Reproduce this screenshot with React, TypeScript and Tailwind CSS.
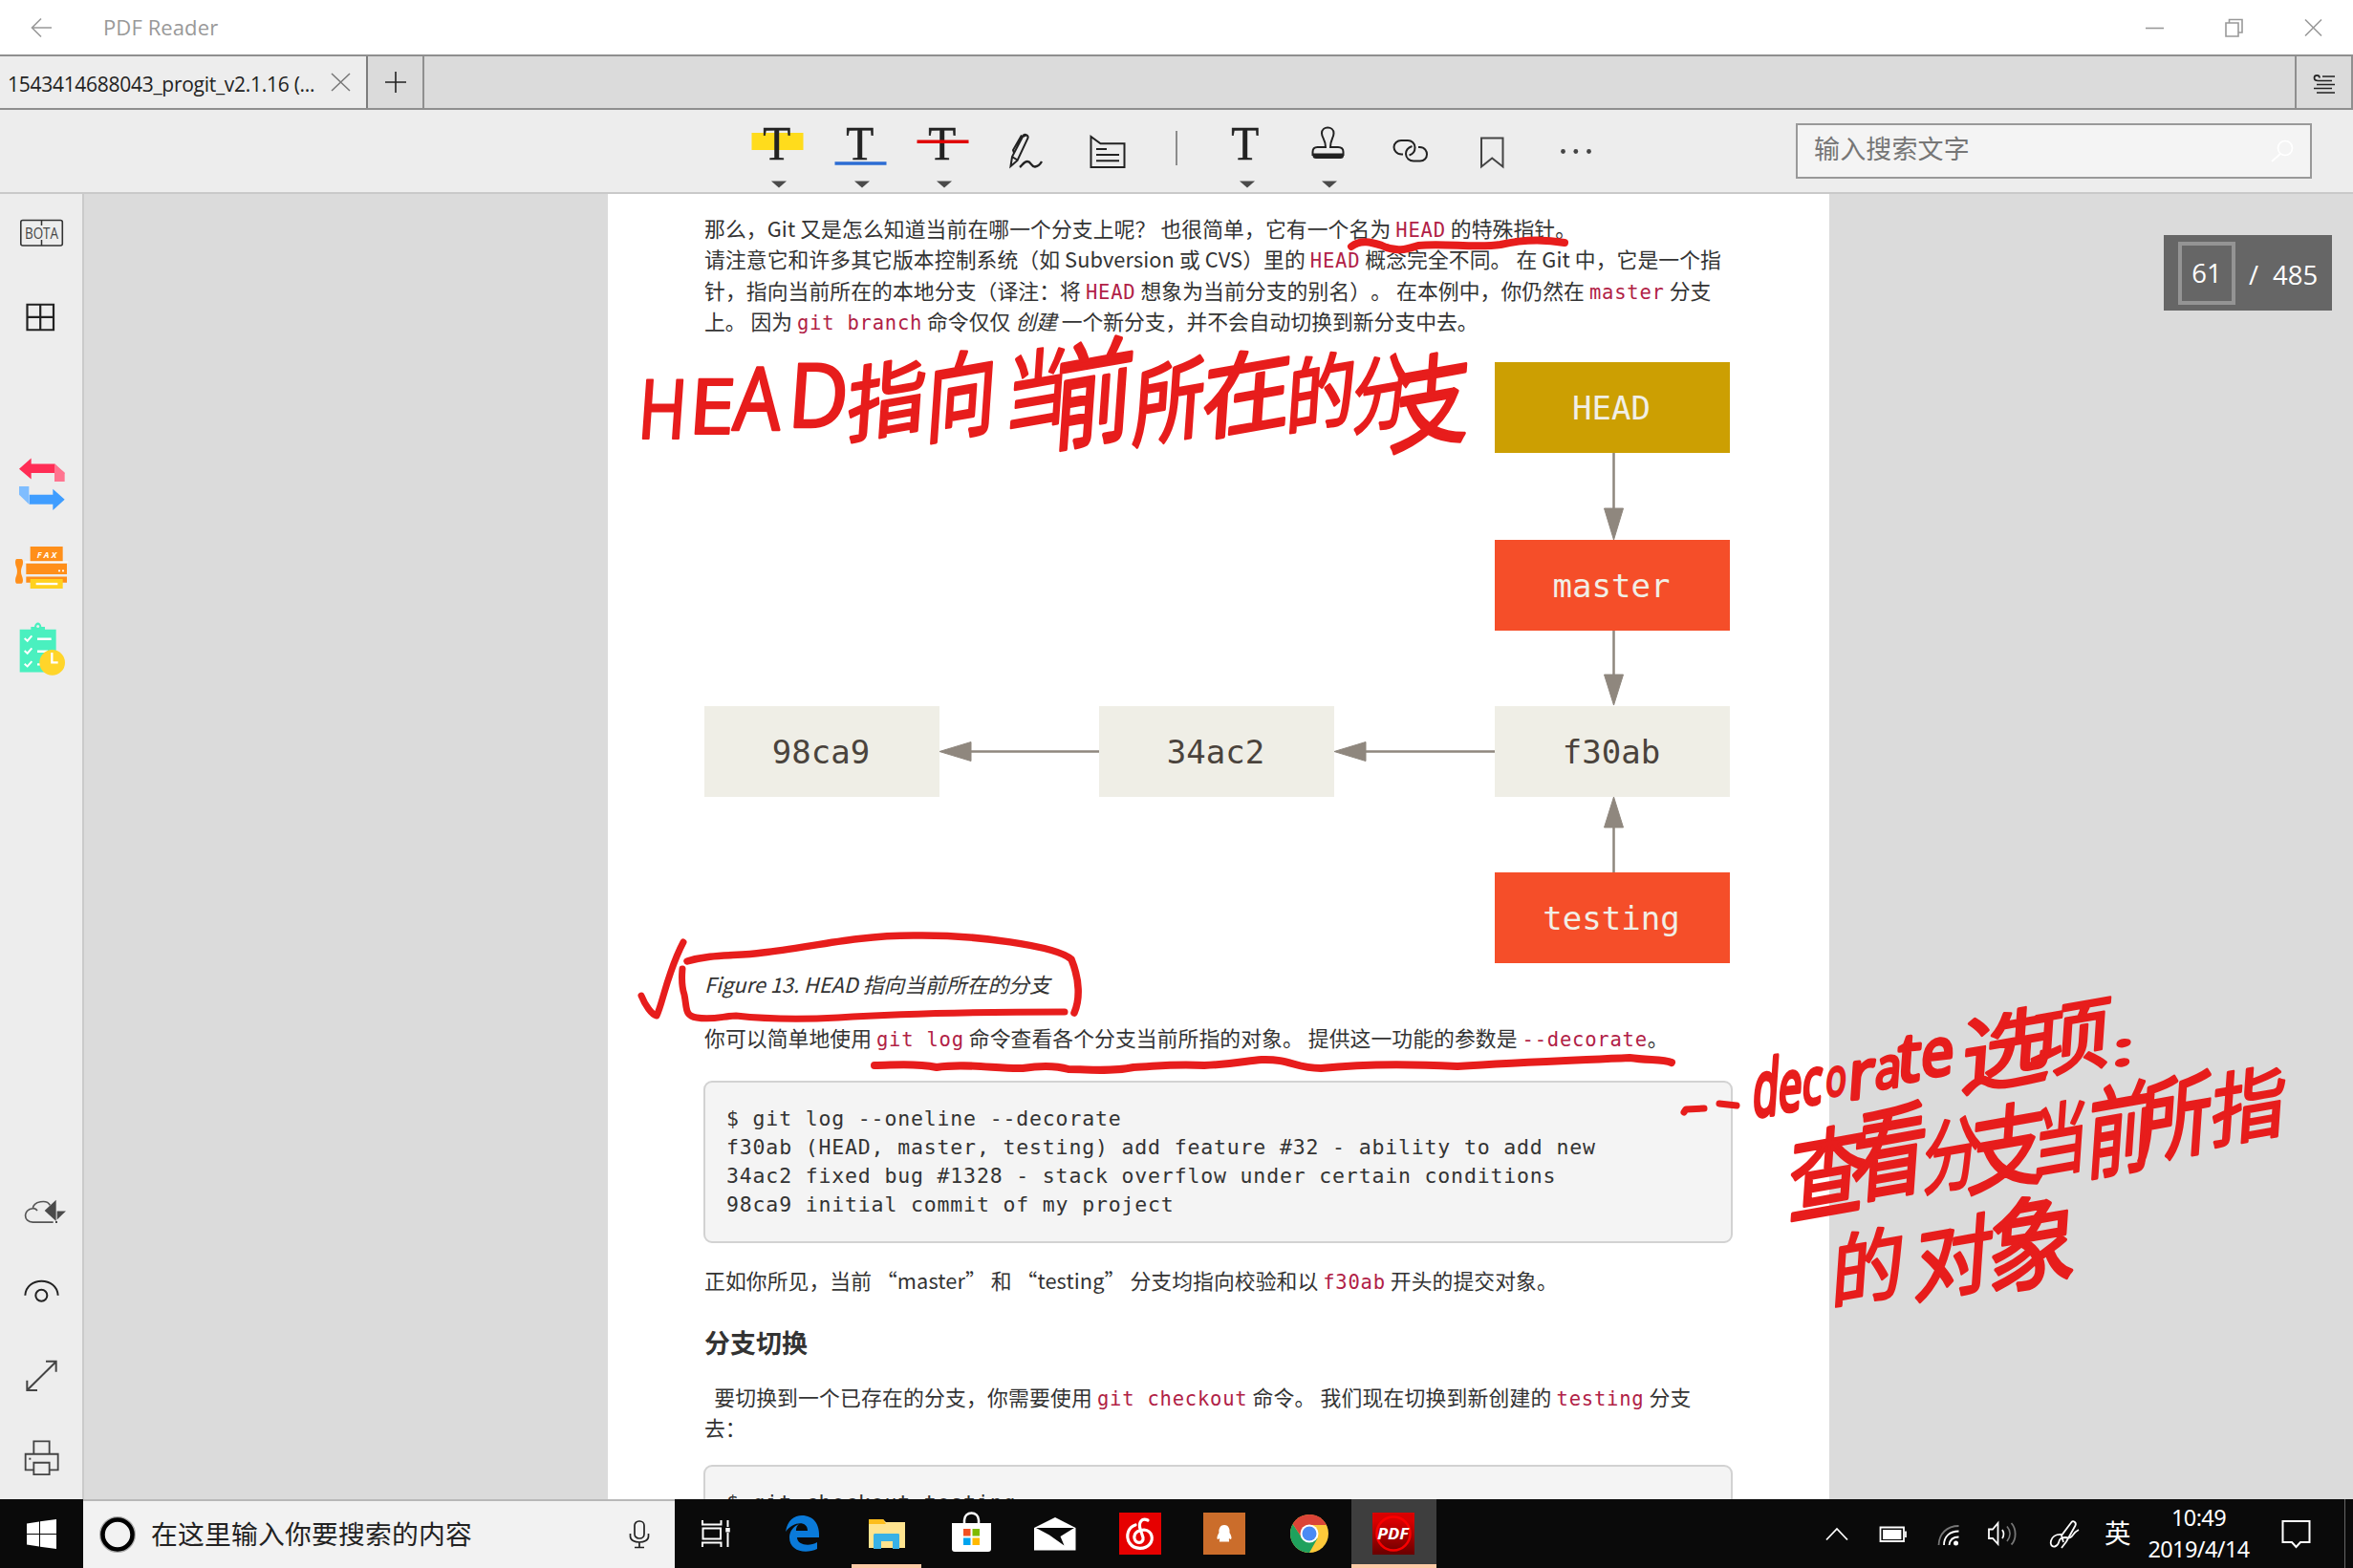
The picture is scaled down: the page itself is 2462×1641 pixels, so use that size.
import type { ReactNode } from 'react';

const INK = '#e71d1c';

/* ---------- title, tabs, toolbar ---------- */

function TitleBar() {
  return (
    <header className="flex h-[57px] items-center bg-white text-[#999]">
      <svg className="ml-[32px] h-[22px] w-[23px]" viewBox="0 0 23 22" fill="none" stroke="currentColor" strokeWidth="1.6">
        <path d="M22 11H1.5M11 1.5 1.5 11l9.500 9.500" />
      </svg>
      <span className="ml-[53px] text-[22px] tracking-[0.1px]">PDF Reader</span>
      <div className="ml-auto flex items-center gap-[64px] pr-[32px]">
        <svg className="h-[20px] w-[19px]" viewBox="0 0 19 20" stroke="currentColor" strokeWidth="1.6"><path d="M0 10.500H19" /></svg>
        <svg className="h-[20px] w-[19px]" viewBox="0 0 19 20" fill="none" stroke="currentColor" strokeWidth="1.6">
          <path d="M1 5h13v14H1zM4.500 5V1.500H18V15h-4" />
        </svg>
        <svg className="h-[20px] w-[19px]" viewBox="0 0 19 20" stroke="currentColor" strokeWidth="1.6"><path d="M1 1.500 18 18.500M18 1.500 1 18.500" /></svg>
      </div>
    </header>
  );
}

function TabBar() {
  return (
    <div className="flex h-[58px] border-y-2 border-[#8f8f8f] bg-[#dbdbdb]">
      <div className="flex w-[385px] items-center border-r-2 border-[#7d7d7d] bg-[#ededed] pl-[8px] text-[#222]">
        <span className="w-[322px] pt-[5px] whitespace-nowrap text-[21px] tracking-[-0.28px]">1543414688043_progit_v2.1.16 (...</span>
        <svg className="ml-[16px] h-[20px] w-[21px]" viewBox="0 0 21 20" stroke="#777" strokeWidth="1.5"><path d="M1 1 20 19M20 1 1 19" /></svg>
      </div>
      <div className="flex w-[59px] items-center justify-center border-r-2 border-[#8f8f8f]">
        <svg className="h-[22px] w-[22px]" viewBox="0 0 22 22" stroke="#222" strokeWidth="1.6"><path d="M0 11H22M11 0V22" /></svg>
      </div>
      <div className="ml-auto flex w-[61px] items-center justify-center border-x-2 border-[#8f8f8f]">
        <svg className="mt-[4px] h-[22px] w-[24px]" viewBox="0 0 24 22" fill="none" stroke="#222" strokeWidth="1.7">
          <path d="M10 3H23M7 4.500C7 1 1.500 1 1.500 4.500c0 3 2 3 4 3H20M4 11.500H23M1 15.500H20M4 20H23" />
        </svg>
      </div>
    </div>
  );
}

function Tool({ children, caret }: { children?: ReactNode; caret?: boolean }) {
  return (
    <svg className="h-[87px] w-[86.5px] shrink-0" viewBox="0 0 86.5 87" fill="none" stroke="#222" strokeWidth="2">
      {children}
      {caret && <path d="M37 74.500H53L45 81.500Z" fill="#4a4a4a" stroke="none" />}
    </svg>
  );
}

function LetterT() {
  return (
    <text x="42.8" y="51.5" textAnchor="middle" fontFamily="Liberation Serif, serif" fontSize="50" fill="#222" stroke="#222" strokeWidth="0.5" textLength="29" lengthAdjust="spacingAndGlyphs">
      T
    </text>
  );
}

function Toolbar() {
  return (
    <div className="flex h-[88px] items-start border-b-2 border-[#c9c9c9] bg-[#ededed]">
      <div className="ml-[770px] flex">
        <Tool caret>
          <path d="M16.500 24H70.500V42H16.500Z" fill="#ffdc1c" stroke="none" />
          <LetterT />
        </Tool>
        <Tool caret>
          <LetterT />
          <path d="M16.500 56H70.500" stroke="#2c6cd3" strokeWidth="3.6" />
        </Tool>
        <Tool caret>
          <LetterT />
          <path d="M16.500 33.200H70.500" stroke="#e00000" strokeWidth="3.600" />
        </Tool>
        <Tool>
          <path d="M27.500 59 29 49 40.500 27c1-2.500 6-.5 5 2.500L34.500 53 27.500 59ZM40 28 43.500 26.500M31 45 30 42 39 26.500M29 49l5.500 3.500" />
          <path d="M37 60c2.500-2 4.500-6 8-6 4 0 4 6 8 5.500 3-.500 5-2 7-5.500" strokeWidth="2.400" />
        </Tool>
        <Tool>
          <path d="M25.500 60V28l10 7.200H60.500V60ZM31 41H42M31 47H55M31 53.200H55" />
        </Tool>
        <div className="flex w-[57.2px] justify-center pt-[22px]">
          <div className="h-[36px] w-[1.500px] bg-[#8c8c8c]" />
        </div>
        <Tool caret><LetterT /></Tool>
        <Tool caret>
          <path d="M41 39C41 31 37 29 37 24.500c0-8 12.500-8 12.500 0C49.500 29 46 31 46 39H54c3.500 0 5.500 1.500 5.500 5v3H27.500V44c0-3.500 2-5 5-5Z" />
          <path d="M29 47H58.500V48c0 1-1 1.500-2 1.500H31c-1 0-2-.5-2-1.500Z" strokeWidth="3" />
        </Tool>
        <Tool>
          <path d="M35 46.500H33.500C28 46.500 25.500 42 25.500 39 25.500 35 29 32 33 32H40C44 32 47.500 35 47.500 39.500 47.500 44 44.500 46.500 41.500 47.500" />
          <path d="M51 39H52.500C58 39 60 43.500 60 46.500 60 50.500 57 53.500 53 53.500H46C42 53.500 38 50.500 38 46 38 41.500 41.500 39 44.500 38" />
        </Tool>
        <Tool><path d="M31 29.500H53.500V59.500L42.200 50.500 31 59.500Z" stroke="#444" /></Tool>
        <Tool>
          <g fill="#444" stroke="none">
            <circle cx="29.500" cy="43.500" r="2.400" />
            <circle cx="42.800" cy="43.500" r="2.400" />
            <circle cx="56.500" cy="43.500" r="2.400" />
          </g>
        </Tool>
      </div>
      <div className="mr-[43px] ml-auto mt-[14px] flex h-[58px] w-[540px] items-center justify-between border-2 border-[#999] bg-[#f4f4f4] pr-[17px] pl-[17px]">
        <span className="-mt-[4px] text-[27px] tracking-[0.15px] text-[#767676]">输入搜索文字</span>
        <svg className="h-[24px] w-[24px]" viewBox="0 0 24 24" fill="none" stroke="#fff" strokeWidth="1.700">
          <circle cx="15" cy="9" r="7.500" /><path d="M10 15 1 23" />
        </svg>
      </div>
    </div>
  );
}

/* ---------- left rail ---------- */

function Rail({ box, children }: { box: string; children: ReactNode }) {
  return <svg className="block h-[87.75px] w-[87px]" viewBox={box} fill="none">{children}</svg>;
}

function Sidebar() {
  return (
    <aside className="flex w-[88px] shrink-0 flex-col justify-between border-r-2 border-[#cacaca] bg-[#ededed]">
      <div className="-mt-[3px]">
        <Rail box="0 200 87 87.75">
          <rect x="21.800" y="230.500" width="43.500" height="26.500" rx="2" stroke="#333" strokeWidth="1.600" />
          <path d="M43.500 230V236M43.500 251V257" stroke="#333" strokeWidth="1.500" />
          <text x="43.500" y="249.500" textAnchor="middle" fontSize="15.5" fill="#444" textLength="35" lengthAdjust="spacingAndGlyphs">BOTA</text>
        </Rail>
        <Rail box="0 287.75 87 87.75">
          <path d="M28.500 318.500H56V345H28.500ZM28.500 331.700H56M42.200 318.500V345" stroke="#222" strokeWidth="2.200" />
        </Rail>
        <div className="h-[87px]" />
        <Rail box="0 66 261 263">
          <path d="M60 149 98 115V133H172L203 164V162H98V181Z" fill="#ff2d55" />
          <path d="M171 133 203 160V189H171Z" fill="#ff7490" />
          <path d="M203 245 166 212V230H92V260H166V279Z" fill="#3f9dff" />
          <path d="M60 204H91V260L60 230Z" fill="#7fbdff" />
        </Rail>
        <Rail box="0 329 261 263">
          <path d="M95 395H197V441H95ZM82 448H210V482H82ZM82 489H210V508H82Z" fill="#ff8f1a" />
          <path d="M78 443H214" stroke="#fff" strokeWidth="4" />
          <path d="M53 434H67C74 434 73 452 69 458 65 468 65 478 69 488 74 500 72 511 67 511H53C47 511 47 496 51 488 55 478 55 468 51 458 47 448 47 434 53 434Z" fill="#ff8f1a" />
          <path d="M95 497H197V527H95Z" fill="#ffd11f" />
          <path d="M113 512H181" stroke="#fff" strokeWidth="7" />
          <path d="M183 471H189M195 471H201" stroke="#fff" strokeWidth="5" />
          <text x="147" y="430" textAnchor="middle" fontSize="27" fontWeight="700" fontStyle="italic" fill="#fff" textLength="62">FAX</text>
        </Rail>
        <Rail box="0 592 261 263">
          <path d="M62 654H97V646H108C110 628 128 628 130 646H141V654H176V788H62Z" fill="#4af0bf" />
          <circle cx="119" cy="644" r="4.500" fill="#ededed" />
          <path d="M117 684H161M117 723H150M117 764H128" stroke="#fff" strokeWidth="7" />
          <path d="M77 682 86 690 100 674M77 721 86 729 100 713M77 762 86 770 100 754" stroke="#fff" strokeWidth="6" />
          <circle cx="164" cy="758" r="40" fill="#ffd52a" />
          <path d="M163 727V758H182" stroke="#fff" strokeWidth="7" />
        </Rail>
      </div>
      <div>
        <Rail box="0 -6 261 263">
          <path d="M167 177H103C72 177 72 136 103 134 105 112 147 104 157 124M103 134Q112 133 117 141" stroke="#555" strokeWidth="5" />
          <path d="M140 141 176 107V174ZM179 142H207L179 169Z" fill="#4a4a4a" />
          <path d="M174 177H180" stroke="#4a4a4a" strokeWidth="6" />
        </Rail>
        <Rail box="0 257 261 263">
          <path d="M79 406C82 346 179 346 182 406" stroke="#222" strokeWidth="6" />
          <circle cx="130" cy="406" r="18" stroke="#222" strokeWidth="6" />
        </Rail>
        <Rail box="0 520 261 263">
          <path d="M85 703 176 613M144 612H176V645M85 672V703H117" stroke="#444" strokeWidth="6" />
        </Rail>
        <Rail box="0 784 261 263">
          <path d="M106 906V866H155V906M104 956H80V906H182V956H157M106 933H155V970H106Z" stroke="#444" strokeWidth="5.500" />
          <path d="M91 921H97" stroke="#444" strokeWidth="6" />
        </Rail>
      </div>
    </aside>
  );
}

/* ---------- document page ---------- */

function Code({ children }: { children: ReactNode }) {
  return <code className="font-['DejaVu_Sans_Mono',monospace] text-[20.5px] tracking-[0.78px] text-[#b12146]">{children}</code>;
}

function Line({ children, cls = '' }: { children: ReactNode; cls?: string }) {
  return <div className={`h-[32.4px] leading-[32.4px] whitespace-pre ${cls}`}>{children}</div>;
}

const nodes = [
  { label: 'HEAD', cls: 'left-[827px] top-[0px] bg-[#cc9f02] text-[#f1efe6]' },
  { label: 'master', cls: 'left-[827px] top-[186px] bg-[#f54e29] text-[#f1efe6]' },
  { label: '98ca9', cls: 'left-0 top-[360px] bg-[#efeee6] text-[#4a433c]' },
  { label: '34ac2', cls: 'left-[413px] top-[360px] bg-[#efeee6] text-[#4a433c]' },
  { label: 'f30ab', cls: 'left-[827px] top-[360px] bg-[#efeee6] text-[#4a433c]' },
  { label: 'testing', cls: 'left-[827px] top-[534px] bg-[#f54e29] text-[#f1efe6]' },
];

function Diagram() {
  return (
    <div className="relative mt-[26.5px] h-[629px] w-[1074px]">
      <svg className="absolute inset-0 h-full w-full" viewBox="0 0 1074 629" fill="#8f877e" stroke="#8f877e" strokeWidth="2.500">
        <path d="M951.500 94V155M951.500 280V330M951.500 534V484M828 407.500H690M413 407.500H275" />
        <path d="M941.500 153H961.500L951.500 186ZM941.500 327H961.500L951.500 359ZM941.500 487H961.500L951.500 455ZM692 397.500V417.500L659 407.500ZM279 397.500V417.500L246 407.500Z" strokeWidth="1" />
      </svg>
      {nodes.map((n) => (
        <div key={n.label} className={`absolute flex h-[95px] w-[246px] items-center justify-center pt-px pr-[2px] font-['DejaVu_Sans_Mono',monospace] text-[34px] ${n.cls}`}>
          {n.label}
        </div>
      ))}
    </div>
  );
}

function Pre({ lines, cls }: { lines: string[]; cls: string }) {
  return (
    <pre className={`-ml-px w-[1077px] rounded-[9px] border-2 border-[#d2d2d2] bg-[#f4f4f4] pt-[23px] pl-[22px] font-['DejaVu_Sans_Mono',monospace] text-[21.5px] leading-[30px] tracking-[0.84px] ${cls}`}>
      {lines.join('\n')}
    </pre>
  );
}

function Page() {
  return (
    <main className="flex w-[1278px] flex-col overflow-hidden bg-white pt-[20px] pl-[101px] text-[21.8px] text-[#333] [text-spacing-trim:space-all] [&>*]:shrink-0">
      <div>
        <Line cls="tracking-[0.1px]">那么，Git 又是怎么知道当前在哪一个分支上呢？ 也很简单，它有一个名为 <Code>HEAD</Code> 的特殊指针。</Line>
        <Line cls="tracking-[0.09px]">请注意它和许多其它版本控制系统（如 Subversion 或 CVS）里的 <Code>HEAD</Code> 概念完全不同。 在 Git 中，它是一个指</Line>
        <Line cls="tracking-[0.09px]">针，指向当前所在的本地分支（译注：将 <Code>HEAD</Code> 想象为当前分支的别名）。 在本例中，你仍然在 <Code>master</Code> 分支</Line>
        <Line>上。 因为 <Code>git branch</Code> 命令仅仅 <em>创建</em> 一个新分支，并不会自动切换到新分支中去。</Line>
      </div>
      <Diagram />
      <div className="mt-[6px] italic"><Line>Figure 13. HEAD 指向当前所在的分支</Line></div>
      <div className="mt-[24px]">
        <Line cls="tracking-[0.08px]">你可以简单地使用 <Code>git log</Code> 命令查看各个分支当前所指的对象。 提供这一功能的参数是 <Code>--decorate</Code>。</Line>
      </div>
      <Pre
        cls="mt-[28px] h-[170px]"
        lines={[
          '$ git log --oneline --decorate',
          'f30ab (HEAD, master, testing) add feature #32 - ability to add new',
          '34ac2 fixed bug #1328 - stack overflow under certain conditions',
          '98ca9 initial commit of my project',
        ]}
      />
      <div className="mt-[23px]"><Line cls="tracking-[0.08px]">正如你所见，当前 “master” 和 “testing” 分支均指向校验和以 <Code>f30ab</Code> 开头的提交对象。</Line></div>
      <h2 className="mt-[29px] h-[40px] text-[27px] leading-[40px] font-bold">分支切换</h2>
      <div className="mt-[20.5px]">
        <Line cls="tracking-[0.19px]">{'  '}要切换到一个已存在的分支，你需要使用 <Code>git checkout</Code> 命令。 我们现在切换到新创建的 <Code>testing</Code> 分支</Line>
        <Line>去：</Line>
      </div>
      <Pre cls="mt-[22px] h-[120px]" lines={['$ git checkout testing']} />
    </main>
  );
}

/* ---------- pen annotations ---------- */

type Mark = [string, number, number, number, number];

const marks: Mark[] = [
  ['H', 675, 398, 712, 459], ['E', 730, 397, 763, 454], ['A', 768, 385, 818, 450], ['D', 834, 381, 884, 447],
  ['指', 891, 375, 965, 460], ['向', 974, 364, 1039, 462], ['当', 1056, 362, 1115, 450], ['前', 1108, 352, 1182, 470],
  ['所', 1190, 373, 1257, 466], ['在', 1263, 363, 1347, 457], ['的', 1350, 368, 1415, 453], ['分', 1419, 368, 1474, 453],
  ['支', 1460, 367, 1534, 472],
  ['d', 1837, 1106, 1858, 1168], ['e', 1863, 1122, 1883, 1163], ['c', 1888, 1119, 1905, 1156], ['o', 1912, 1117, 1930, 1147],
  ['r', 1939, 1111, 1960, 1149], ['a', 1964, 1106, 1985, 1139], ['t', 1987, 1085, 2009, 1132], ['e', 2013, 1088, 2041, 1126],
  ['选', 2057, 1054, 2142, 1142], ['项', 2129, 1044, 2205, 1126], [':', 2216, 1089, 2226, 1115],
  ['查', 1876, 1176, 1949, 1278], ['看', 1942, 1152, 2013, 1257], ['分', 2016, 1166, 2070, 1249], ['支', 2064, 1152, 2137, 1248],
  ['当', 2130, 1150, 2182, 1232], ['前', 2188, 1130, 2251, 1233], ['所', 2242, 1120, 2311, 1216], ['指', 2318, 1115, 2388, 1198],
  ['的', 1921, 1284, 1989, 1367], ['对', 2008, 1271, 2082, 1360], ['象', 2085, 1248, 2170, 1353],
];

/* left, width, top, height of the visible shape in a 100-unit em */
const shapes: Record<string, [number, number, number, number]> = {
  H: [10, 54, 71, 71], E: [10, 38, 71, 71], A: [0, 64, 71, 71], D: [10, 58, 71, 71],
  d: [5, 48, 76, 77], e: [5, 46, 54, 55], c: [5, 39, 54, 55], o: [5, 50, 54, 55],
  r: [8, 32, 54, 54], a: [4, 43, 54, 55], t: [2, 33, 66, 67], ':': [7, 12, 54, 55],
};

function Annotations() {
  return (
    <svg className="pointer-events-none absolute inset-0 h-[1641px] w-[2462px]" viewBox="0 0 2462 1641" fill="none" stroke={INK} strokeLinecap="round" strokeLinejoin="round">
      {marks.map(([ch, x0, y0, x1, y1], i) => {
        const [l, w, t, h] = shapes[ch] ?? [5, 90, 84, 92];
        const wide = !shapes[ch];
        const slant = wide ? -10 : i < 4 ? 0 : -6;
        return (
          <text
            key={i}
            fontSize="100"
            fill={INK}
            strokeWidth={wide ? 3.5 : i < 4 ? 2.5 : 6}
            className={wide ? "font-['Noto_Sans_CJK_SC',sans-serif]" : "font-['Noto_Sans',sans-serif]"}
            transform={`translate(${(x0 + x1) / 2} ${(y0 + y1) / 2}) skewY(${slant}) skewX(-4) scale(${(x1 - x0) / w} ${((y1 - y0) / h) * (wide ? 0.92 : 1)}) translate(${-l - w / 2} ${t - h / 2})`}
          >
            {ch}
          </text>
        );
      })}
      <g strokeWidth="8">
        <path d="M1414 258C1424 250 1436 254 1446 257 1462 265 1474 260 1484 257 1510 254 1545 260 1570 256 1595 250 1615 250 1637 254" />
        <path d="M671 1042C675 1052 682 1062 687 1063 693 1052 698 1018 715 986" strokeWidth="7" />
        <path d="M719 1006C745 998 770 1001 798 997 846 992 893 979 956 979 1020 978 1106 990 1121 1004 1130 1026 1130 1046 1124 1060" strokeWidth="7.500" />
        <path d="M714 1014C713 1025 714 1035 716 1041 719 1055 716 1063 729 1065 746 1068 758 1063 770 1063 806 1067 838 1067 877 1065 940 1061 996 1059 1114 1059" strokeWidth="7" />
        <path d="M915 1115C935 1115 955 1112 980 1117 1010 1112 1045 1119 1070 1118 1095 1114 1108 1116 1118 1119 1140 1119 1162 1122 1186 1117 1210 1116 1228 1113 1260 1115 1290 1114 1305 1110 1320 1109 1350 1108 1355 1118 1382 1118 1410 1115 1450 1112 1525 1116 1585 1112 1640 1110 1705 1107 1725 1110 1740 1108 1749 1112" strokeWidth="8" />
        <path d="M1762 1164 1764 1161 1783 1160M1799 1155 1817 1157" strokeWidth="7" />
      </g>
    </svg>
  );
}

/* ---------- taskbar ---------- */

function TaskItem({ children, active, open }: { children: ReactNode; active?: boolean; open?: boolean }) {
  return (
    <div className={`relative flex h-full w-[88.5px] justify-center ${active ? 'bg-[#3e3e3e]' : ''}`}>
      <svg className="h-[72px] w-[88px]" viewBox="0 0 88 72" fill="none">{children}</svg>
      {open && <div className={`absolute bottom-0 h-[4px] bg-[#fccaa6] ${active ? 'inset-x-0' : 'inset-x-[8px]'}`} />}
    </div>
  );
}

function Taskbar() {
  return (
    <footer className="flex h-[72px] shrink-0 bg-[#0a0a0a] text-white">
      <div className="flex w-[87px] items-center justify-center">
        <svg className="h-[31px] w-[31px]" viewBox="0 0 31 31" fill="#fff"><path d="M0 4.500 13 2.500V15H0ZM14 2.300 31 0V15H14ZM0 16H13V28.500L0 26.500ZM14 16H31V31L14 28.700Z" /></svg>
      </div>
      <div className="flex w-[619px] items-center border-t-2 border-[#b8b8b8] bg-[#f2f2f2] pr-[26px] pl-[16px] text-[#222]">
        <svg className="h-[40px] w-[40px]" viewBox="0 0 40 40" fill="none">
          <circle cx="20" cy="20" r="17" stroke="#aaa" strokeWidth="4" />
          <circle cx="20" cy="20" r="15.500" stroke="#000" strokeWidth="4.500" />
        </svg>
        <span className="-mt-px ml-[15px] text-[27.8px] tracking-[0.2px]">在这里输入你要搜索的内容</span>
        <svg className="ml-auto h-[30px] w-[22px]" viewBox="0 0 22 30" fill="none" stroke="#222" strokeWidth="1.700">
          <rect x="6" y="1" width="10" height="18" rx="4.500" /><path d="M1.500 14v3c0 8 19 8 19 0V14M11 23V28.500M6 28.500H16" />
        </svg>
      </div>
      <TaskItem>
        <g stroke="#fff" strokeWidth="2"><path d="M29 22V26.500H48.500V22M29 50V45.500H48.500V50M29.500 30.500H48V41.500H29.500ZM55.500 22V29M55.500 35V50" /><path d="M55.500 30V34.500" strokeWidth="4.500" /></g>
      </TaskItem>
      <TaskItem>
        <path d="M27 34C29 22 36 17 44 17 56 17 63 26 62 40H39C39 48 52 50 60 45V52C47 58 31 54 31 40 31 33 36 28 41 26 38 29 38 31 38 33H50C50 22 35 23 27 34Z" fill="#0a7ad9" />
      </TaskItem>
      <TaskItem open>
        <path d="M26 21H41L44 24H64V51H26Z" fill="#ffe48f" />
        <path d="M26 21H41L44 26H26Z" fill="#fdbd1c" />
        <path d="M31 52V38C31 36 32 36 33 36H57C58 36 58 37 58 38V52H51V44H39V52Z" fill="#38b1e6" />
      </TaskItem>
      <TaskItem>
        <path d="M24 25H65V52C65 54 64 55 62 55H27C25 55 24 54 24 52Z" fill="#fff" />
        <path d="M37 32V22C37 12 52 12 52 22V32" stroke="#fff" strokeWidth="2.500" />
        <path d="M36 31H43.500V38.500H36Z" fill="#f25022" /><path d="M45.500 31H53V38.500H45.500Z" fill="#7fba00" />
        <path d="M36 40.500H43.500V48H36Z" fill="#00a4ef" /><path d="M45.500 40.500H53V48H45.500Z" fill="#ffb900" />
      </TaskItem>
      <TaskItem>
        <path d="M22 30 44 19 65.500 30V53.500H22Z" fill="#fff" /><path d="M24 30H64L49.500 39 53.500 48.500 38 37.500Z" fill="#0a0a0a" />
      </TaskItem>
      <TaskItem>
        <path d="M22 14H66V58H22Z" fill="#e60000" />
        <path d="M52 22C46 19 42 24 44 31L47 40C48 47 39 47 38 41 37 34 44 32 48 32 57 33 58 42 54 47 49 53 38 53 33 46 28 38 32 29 39 27" stroke="#fff" strokeWidth="3.200" strokeLinecap="round" />
      </TaskItem>
      <TaskItem>
        <path d="M22 14H66V58H22Z" fill="#cb6d2b" />
        <path d="M44 27C39 27 38 32 38.500 35 36 39 36 42 37.500 42L39 41C39.500 43 38.500 44 39 44.500H49C49.500 44 48.500 43 49 41L50.500 42C52 42 52 39 49.500 35 50 32 49 27 44 27Z" fill="#fff" />
      </TaskItem>
      <TaskItem>
        <g transform="translate(44 36)">
          <circle r="20" fill="#fdc93a" />
          <path d="M-17.300 -10A20 20 0 0 0 0 20L8.500 5-8 4Z" fill="#1fa15d" />
          <path d="M-17.300 -10A20 20 0 0 1 18 -9H0L-8 4Z" fill="#db4437" />
          <circle r="9.500" fill="#fff" /><circle r="7.500" fill="#4a8af4" />
        </g>
      </TaskItem>
      <TaskItem active open>
        <defs><linearGradient id="pdfRed" x1="0" x2="0" y1="0" y2="1"><stop offset="0.200" stopColor="#d80000" /><stop offset="1" stopColor="#690000" /></linearGradient></defs>
        <path d="M22 14H66V58H22Z" fill="url(#pdfRed)" />
        <circle cx="44" cy="36" r="17.500" stroke="#fa0000" strokeWidth="2.500" />
        <text x="43.500" y="42" textAnchor="middle" fontSize="16" fontWeight="700" fontStyle="italic" fill="#fff" textLength="33" lengthAdjust="spacingAndGlyphs">PDF</text>
      </TaskItem>
      <div className="ml-auto flex items-center">
        <svg className="h-[72px] w-[290px]" viewBox="1901 0 290 72" fill="none" stroke="#fff" strokeWidth="1.800">
          <path d="M1911 42.500 1922 31 1933 42.500" />
          <path d="M1967.500 29.500H1992V44H1967.500Z" /><path d="M1971 33H1988.500V41H1971Z" fill="#fff" /><path d="M1994 33.500V40" />
          <path d="M2028.500 48C2029 36 2037 28 2049.500 28" stroke="#777" /><path d="M2034 48C2034 39 2040 33.500 2049.500 33.500M2039.500 48C2040 43 2043 39.500 2049.500 39.500" /><circle cx="2046.500" cy="46" r="2.500" fill="#fff" stroke="none" />
          <path d="M2081 31.500H2085L2090.500 25V47L2085 41H2081ZM2095 32C2097 35 2097 38 2095 41" /><path d="M2100 28.500C2104 33 2104 39 2100 44M2104.500 25C2110 31 2110 42 2104.500 47.500" stroke="#777" />
          <path d="M2159 45 2157 38 2167.500 24C2169 22 2173 24 2171.500 27.500L2162 44.500 2157 51M2157 37C2144 36 2143 51 2150 49.500 2157 48 2151 40 2161 40 2170 42 2167 36 2175 32" />
        </svg>
        <span className="ml-[11px] text-[27.5px]">英</span>
        <div className="ml-[11px] flex w-[120px] flex-col items-center font-['Noto_Sans',sans-serif] text-[23.5px] leading-[33px] tracking-[-0.6px]">
          <span>10:49</span>
          <span>2019/4/14</span>
        </div>
        <svg className="ml-[26px] h-[31px] w-[31px]" viewBox="0 0 31 31" fill="none" stroke="#fff" strokeWidth="2"><path d="M1.500 2H29.500V24H20L15.500 29 11 24H1.500Z" /></svg>
        <div className="mr-[8px] ml-[35px] h-[72px] w-[1.500px] bg-[#666]" />
      </div>
    </footer>
  );
}

export default function App() {
  return (
    <div className="relative flex h-[1641px] w-[2462px] flex-col overflow-hidden bg-[#dbdbdb] font-['Open_Sans','Noto_Sans_CJK_SC',sans-serif]">
      <TitleBar />
      <TabBar />
      <Toolbar />
      <div className="flex min-h-0 flex-1">
        <Sidebar />
        <div className="flex flex-1 overflow-hidden pl-[548px] font-['Noto_Sans_CJK_SC',sans-serif]">
          <Page />
          <div className="mt-[43px] ml-auto mr-[22px] flex h-[79px] w-[176px] items-center bg-[#666] pl-[15px] font-['Open_Sans',sans-serif] text-[27.500px] text-white">
            <div className="flex h-[66px] w-[60px] items-center justify-center border-4 border-[#949494] pt-px">61</div>
            <span className="ml-[14px] pt-[4px]">/</span>
            <span className="ml-[15px] pt-[4px]">485</span>
          </div>
        </div>
      </div>
      <Taskbar />
      <Annotations />
    </div>
  );
}
